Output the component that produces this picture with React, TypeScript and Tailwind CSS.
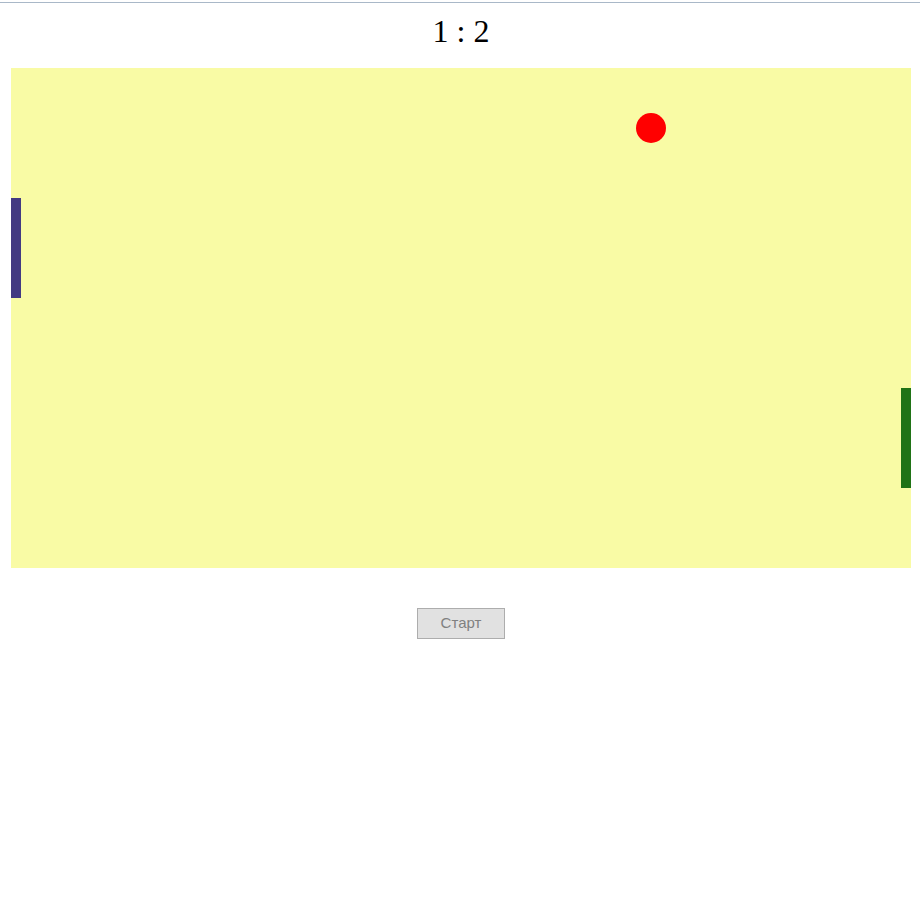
const PADDLES = [
  { id: "left", side: "left-0", top: 130, color: "bg-[#433a82]" },
  { id: "right", side: "right-0", top: 320, color: "bg-[#207316]" },
];

const BALL = { x: 640, y: 60, r: 15 };

const Field = () => {
  return (
    <div className="relative ml-[11px] w-[900px] h-[500px] bg-[#f9fba5]">
      {PADDLES.map((p) => (
        <div
          key={p.id}
          className={`absolute ${p.side} w-[10px] h-[100px] ${p.color}`}
          style={{ top: p.top }}
        />
      ))}
      <div
        className="absolute rounded-full bg-[#ff0000]"
        style={{
          left: BALL.x - BALL.r,
          top: BALL.y - BALL.r,
          width: BALL.r * 2,
          height: BALL.r * 2,
        }}
      />
    </div>
  );
};

const App = () => {
  return (
    <div className="w-[920px] h-[920px] bg-white">
      <div className="h-[2px]" />
      <div className="h-px bg-[#a9b8c8]" />
      <h1 className="pt-[10px] ml-[11px] w-[900px] text-center text-[32px] leading-[37px] text-black font-['Liberation_Serif',serif]">
        1 : 2
      </h1>
      <div className="mt-[18px]">
        <Field />
      </div>
      <div className="ml-[11px] w-[900px] mt-[40px] flex justify-center">
        <button
          disabled
          className="w-[88px] h-[31px] bg-[#e1e1e1] border border-[#adadad] text-[#808080] text-[15px] font-['Liberation_Sans',Arial,sans-serif]"
        >
          Старт
        </button>
      </div>
    </div>
  );
};

export default App;
